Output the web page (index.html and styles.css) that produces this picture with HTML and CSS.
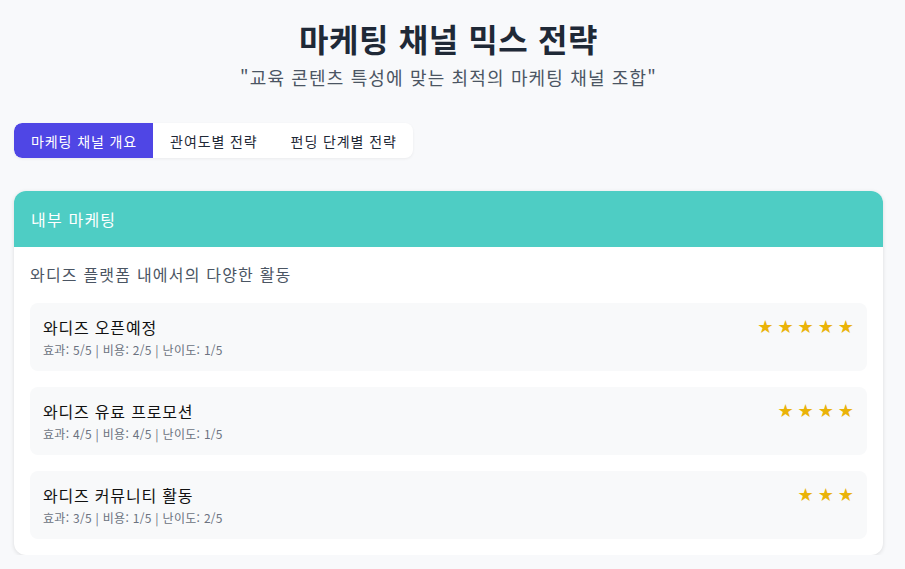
FILE: index.html
```html
<!DOCTYPE html>
<html lang="ko">
<head>
<meta charset="utf-8">
<link rel="stylesheet" href="styles.css">
</head>
<body>
<div class="page">
  <header class="head">
    <h1 class="title">마케팅 채널 믹스 전략</h1>
    <p class="subtitle">"교육 콘텐츠 특성에 맞는 최적의 마케팅 채널 조합"</p>
  </header>
  <nav class="tabs">
    <button class="tab active">마케팅 채널 개요</button>
    <button class="tab">관여도별 전략</button>
    <button class="tab">펀딩 단계별 전략</button>
  </nav>
  <section class="card">
    <div class="card-head">내부 마케팅</div>
    <div class="card-body">
      <p class="desc">와디즈 플랫폼 내에서의 다양한 활동</p>
      <div class="item">
        <div class="item-text">
          <div class="item-title">와디즈 오픈예정</div>
          <div class="item-meta">효과: 5/5 | 비용: 2/5 | 난이도: 1/5</div>
        </div>
        <div class="stars">★★★★★</div>
      </div>
      <div class="item">
        <div class="item-text">
          <div class="item-title">와디즈 유료 프로모션</div>
          <div class="item-meta">효과: 4/5 | 비용: 4/5 | 난이도: 1/5</div>
        </div>
        <div class="stars">★★★★</div>
      </div>
      <div class="item">
        <div class="item-text">
          <div class="item-title">와디즈 커뮤니티 활동</div>
          <div class="item-meta">효과: 3/5 | 비용: 1/5 | 난이도: 2/5</div>
        </div>
        <div class="stars">★★★</div>
      </div>
    </div>
  </section>
</div>
</body>
</html>
```
FILE: styles.css
```css
* { box-sizing: border-box; }
html, body { margin: 0; padding: 0; }
body {
  background: #f8f9fb;
  font-family: "Noto Sans CJK KR", "Noto Sans", sans-serif;
  color: #1f2937;
}
.page {
  width: 869px;
  margin-left: 14px;
  padding-top: 16px;
}
.head { text-align: center; }
.title {
  margin: 0;
  font-size: 32px;
  line-height: 44px;
  font-weight: 700;
  letter-spacing: 0.6px;
  color: #1f2937;
}
.subtitle {
  margin: 4px 0 0;
  font-size: 18px;
  line-height: 26px;
  letter-spacing: 1.15px;
  color: #4b5563;
}
.tabs {
  display: inline-flex;
  margin-top: 33px;
  background: #fff;
  border-radius: 8px;
  box-shadow: 0 1px 3px rgba(0,0,0,0.06);
  overflow: hidden;
}
.tab {
  border: 0;
  background: transparent;
  font-family: inherit;
  font-size: 14px;
  letter-spacing: 0.9px;
  color: #1f2937;
  height: 35px;
  padding: 0 16px 0 17px;
  cursor: pointer;
}
.tab.active {
  background: #4f46e5;
  color: #fff;
  border-radius: 8px 0 0 8px;
}
.card {
  margin-top: 33px;
  background: #fff;
  border-radius: 12px;
  box-shadow: 0 1px 4px rgba(0,0,0,0.12);
  overflow: hidden;
}
.card-head {
  background: #4ecdc4;
  color: #fff;
  height: 56px;
  display: flex;
  align-items: center;
  padding: 0 17px;
  font-size: 16px;
  letter-spacing: 1.2px;
}
.card-body {
  padding: 14px 16px 16px;
}
.desc {
  margin: 0 0 16px;
  font-size: 16px;
  line-height: 26px;
  letter-spacing: 1.2px;
  color: #4b5563;
}
.item {
  display: flex;
  justify-content: space-between;
  align-items: flex-start;
  background: #f8f9fa;
  border-radius: 8px;
  height: 68px;
  padding: 13px 13px 0;
  margin-bottom: 16px;
}
.item:last-child { margin-bottom: 0; }
.item-title {
  font-size: 16px;
  line-height: 22px;
  letter-spacing: 0.8px;
  color: #111;
}
.item-meta {
  margin-top: 3px;
  font-size: 12px;
  line-height: 18px;
  letter-spacing: 0.3px;
  color: #6b7280;
}
.stars {
  color: #eab308;
  font-size: 18px;
  letter-spacing: 4px;
  line-height: 22px;
  margin-right: -4px;
  font-family: "DejaVu Sans", sans-serif;
}
```
